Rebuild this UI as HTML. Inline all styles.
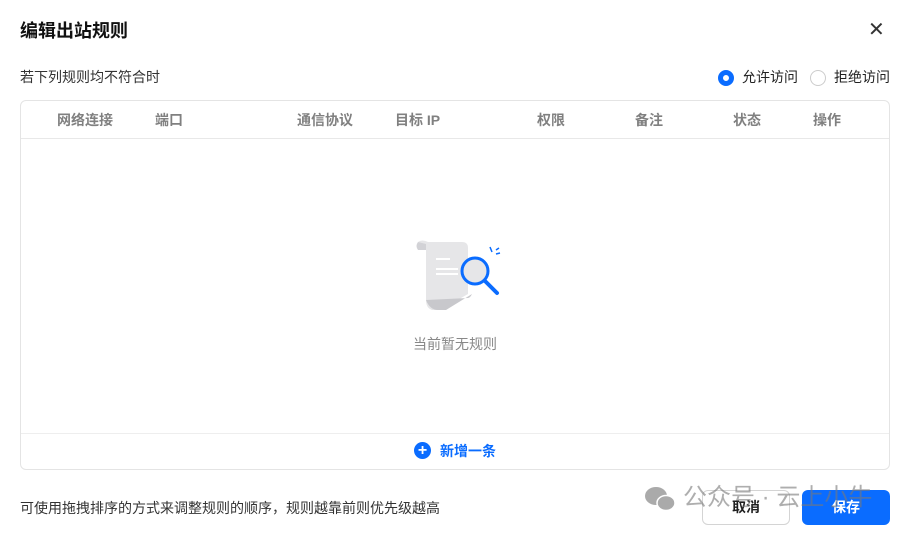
<!DOCTYPE html>
<html><head><meta charset="utf-8"><style>
*{margin:0;padding:0;box-sizing:border-box}
body{width:910px;height:534px;background:#fff;font-family:"Liberation Sans","Noto Sans CJK SC",sans-serif;position:relative;overflow:hidden;color:#1f1f1f}
.a{position:absolute;white-space:nowrap;line-height:1}
.h{font-size:14px;font-weight:bold;color:#808080;top:113px}
</style></head><body>
<div class="a" style="left:20px;top:22px;font-size:18px;font-weight:bold;color:#111">编辑出站规则</div>
<div class="a" style="left:868px;top:20px;font-size:20px;color:#333">✕</div>
<div class="a" style="left:20px;top:70px;font-size:14px;color:#333">若下列规则均不符合时</div>
<div class="a" style="left:718px;top:70px;width:16px;height:16px;border-radius:50%;border:5px solid #0a6cff"></div>
<div class="a" style="left:742px;top:70px;font-size:14px;color:#222">允许访问</div>
<div class="a" style="left:810px;top:70px;width:16px;height:16px;border-radius:50%;border:1px solid #ccc"></div>
<div class="a" style="left:834px;top:70px;font-size:14px;color:#222">拒绝访问</div>
<div class="a" style="left:20px;top:100px;width:870px;height:370px;border:1px solid #e4e4e4;border-radius:6px"></div>
<div class="a" style="left:21px;top:138px;width:868px;height:1px;background:#e8e8e8"></div>
<div class="a" style="left:21px;top:433px;width:868px;height:1px;background:#eee"></div>
<div class="a h" style="left:57px">网络连接</div>
<div class="a h" style="left:155px">端口</div>
<div class="a h" style="left:297px">通信协议</div>
<div class="a h" style="left:395px">目标 IP</div>
<div class="a h" style="left:537px">权限</div>
<div class="a h" style="left:635px">备注</div>
<div class="a h" style="left:733px">状态</div>
<div class="a h" style="left:813px">操作</div>
<svg class="a" style="left:412px;top:238px" width="92" height="76" viewBox="0 0 92 76">
<path d="M6 4 Q10 1 16 4 L50 4 Q56 4 56 10 L56 56 L28 72 L20 72 Q14 70 14 62 L14 8 Z" fill="#e6e6e8"/>
<path d="M6 4 Q3 8 6 12 L14 12 L14 6 Z" fill="#d2d2d6"/>
<path d="M14 62 Q18 72 26 72 L34 72 L60 56 Q58 60 56 60 Z" fill="#c8c8cc"/>
<rect x="24" y="20" width="14" height="2" fill="#fff"/><rect x="24" y="30" width="22" height="2" fill="#fff"/><rect x="24" y="35" width="22" height="2" fill="#fff"/>
<circle cx="63" cy="33" r="13" fill="#e6e6e8" stroke="#0a6cff" stroke-width="3"/>
<line x1="73" y1="43" x2="85" y2="55" stroke="#0a6cff" stroke-width="4" stroke-linecap="round"/>
<path d="M78 9 L80 14 M84 16 L88 15 M84 12 L87 10" stroke="#0a6cff" stroke-width="1.5"/>
</svg>
<div class="a" style="left:413px;top:337px;font-size:14px;color:#888">当前暂无规则</div>
<div class="a" style="left:414px;top:442px;width:17px;height:17px;border-radius:50%;background:#0a6cff;color:#fff;font-size:16px;line-height:17px;text-align:center;font-weight:bold">+</div>
<div class="a" style="left:440px;top:444px;font-size:14px;font-weight:bold;color:#0a6cff">新增一条</div>
<div class="a" style="left:20px;top:501px;font-size:14px;color:#333">可使用拖拽排序的方式来调整规则的顺序，规则越靠前则优先级越高</div>
<div class="a" style="left:702px;top:490px;width:88px;height:35px;border:1px solid #d4d4d4;border-radius:6px;font-size:14px;font-weight:bold;text-align:center;line-height:33px">取消</div>
<div class="a" style="left:802px;top:490px;width:88px;height:35px;background:#0a6cff;border-radius:6px;font-size:14px;font-weight:bold;color:#fff;text-align:center;line-height:35px">保存</div>
<svg class="a" style="left:643px;top:485px" width="34" height="28"><ellipse cx="13" cy="11" rx="11" ry="9" fill="#aaa"/><ellipse cx="23" cy="18" rx="9" ry="7.5" fill="#aaa" stroke="#fff" stroke-width="1.5"/></svg>
<div class="a" style="left:683px;top:486px;font-size:24px;color:rgba(120,120,120,0.6)">公众号 · 云上小牛</div>
</body></html>
